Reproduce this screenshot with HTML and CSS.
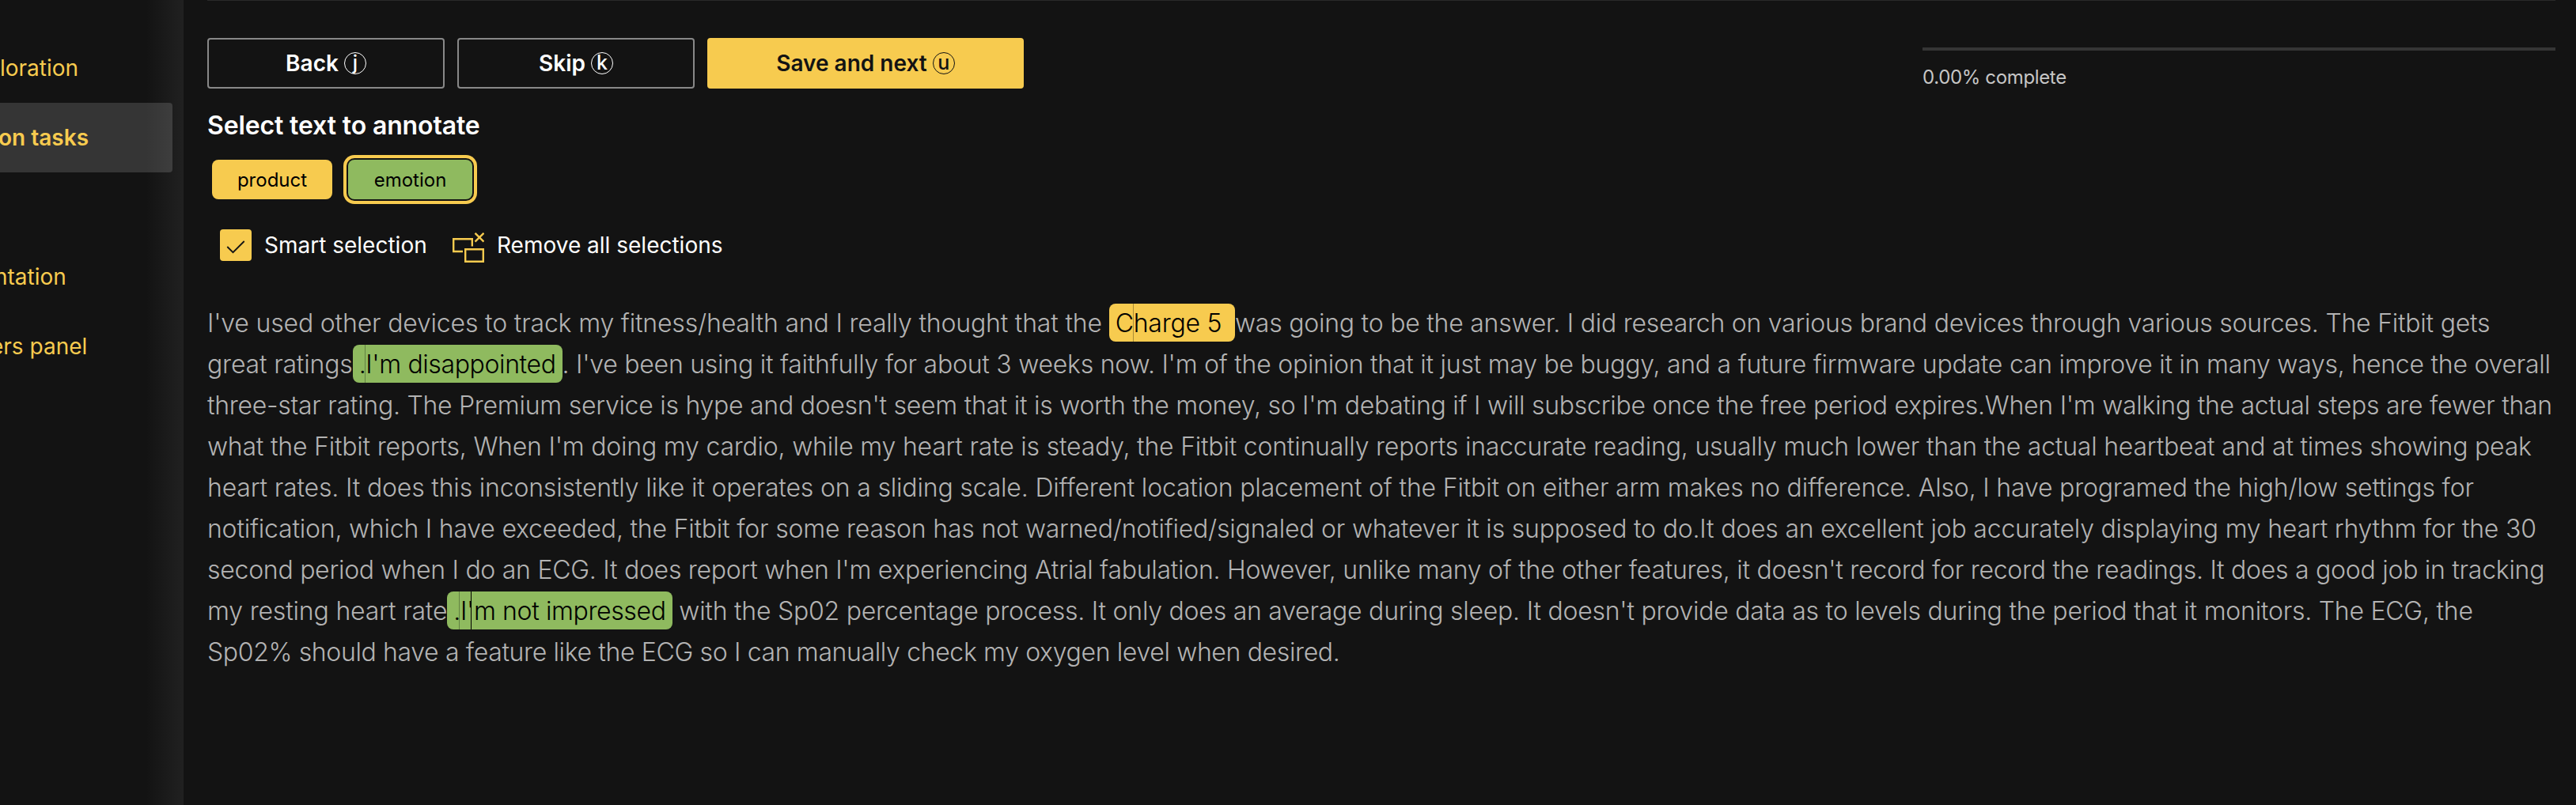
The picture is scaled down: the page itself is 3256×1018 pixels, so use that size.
FILE: index.html
```html
<!DOCTYPE html>
<html lang="en">

<head>
    <meta charset="UTF-8">
    <meta name="viewport" content="width=device-width, initial-scale=1.0">
    <title>Annotation tasks</title>
    <link rel="stylesheet" href="styles.css">
</head>

<body>
    <div class="app">
        <nav class="sidebar">
            <a class="nav-item nav-exploration">loration</a>
            <a class="nav-item nav-tasks active">on tasks</a>
            <a class="nav-item"></a>
            <a class="nav-item nav-documentation">ntation</a>
            <a class="nav-item nav-panel">ers panel</a>
        </nav>

        <main class="content">
            <div class="toolbar">
                <div class="actions">
                    <button class="btn">Back <span class="key">j</span></button>
                    <button class="btn">Skip <span class="key">k</span></button>
                    <button class="btn btn-primary">Save and next <span class="key">u</span></button>
                </div>
                <div class="progress">
                    <div class="progress-bar"></div>
                    <div class="progress-text">0.00% complete</div>
                </div>
            </div>

            <h2 class="title">Select text to annotate</h2>

            <div class="labels">
                <button class="label label-product">product</button>
                <button class="label label-emotion selected">emotion</button>
            </div>

            <div class="options">
                <span class="checkbox">
                    <svg width="40" height="40" viewBox="0 0 40 40">
                        <path d="M9.3 22l7.2 7.2L30.7 15" fill="none" stroke="#131313" stroke-width="1.8" />
                    </svg>
                </span>
                <span class="option-text smart">Smart selection</span>
                <svg class="remove-icon" width="40" height="40" viewBox="0 0 40 40">
                    <g fill="none" stroke="#f7cb4f" stroke-width="2.4">
                        <path d="M13 24H1.2V8.2H24.8V17.5" />
                        <path d="M16.2 21.2H38.8V36.8H16.2z" />
                        <path d="M28.5 .8l11 10.8M39.5 .8l-11 10.8" />
                    </g>
                </svg>
                <span class="option-text remove">Remove all selections</span>
            </div>

            <p class="document">
                <span class="line"><span class="loose">I've used other devices to track my fitness/health and I really thought that the </span><mark class="mark product">Charge 5&nbsp;</mark>was going to be the answer. I did research on various brand devices through various sources. The Fitbit gets</span>
                <span class="line snug"><span class="loose">great ratings</span><mark class="mark emotion">.I'm disappointed</mark>. I've been using it faithfully for about 3 weeks now. I'm of the opinion that it just may be buggy, and a future firmware update can improve it in many ways, hence the overall</span>
                <span class="line tight">three-star rating. The Premium service is hype and doesn't seem that it is worth the money, so I'm debating if I will subscribe once the free period expires.When I'm walking the actual steps are fewer than</span>
                <span class="line regular">what the Fitbit reports, When I'm doing my cardio, while my heart rate is steady, the Fitbit continually reports inaccurate reading, usually much lower than the actual heartbeat and at times showing peak</span>
                <span class="line loose">heart rates. It does this inconsistently like it operates on a sliding scale. Different location placement of the Fitbit on either arm makes no difference. Also, I have programed the high/low settings for</span>
                <span class="line regular">notification, which I have exceeded, the Fitbit for some reason has not warned/notified/signaled or whatever it is supposed to do.It does an excellent job accurately displaying my heart rhythm for the 30</span>
                <span class="line tight">second period when I do an ECG. It does report when I'm experiencing Atrial fabulation. However, unlike many of the other features, it doesn't record for record the readings. It does a good job in tracking</span>
                <span class="line"><span class="loose">my resting heart rate</span><mark class="mark emotion caret">.I'm not impressed</mark> with the Sp02 percentage process. It only does an average during sleep. It doesn't provide data as to levels during the period that it monitors. The ECG, the</span>
                <span class="line tightest">Sp02% should have a feature like the ECG so I can manually check my oxygen level when desired.</span>
            </p>
        </main>
    </div>
</body>

</html>
```

FILE: styles.css
```css
* {
    box-sizing: border-box;
}

body {
    margin: 0;
    background: #131313;
    color: #fff;
    font-family: Inter, "Liberation Sans", sans-serif;
    font-size: 28px;
}

.app {
    display: flex;
    height: 1018px;
    overflow: hidden;
}

.sidebar {
    position: relative;
    flex: 0 0 232px;
    padding: 42px 14px 0 0;
    overflow: hidden;
}

/* inner shadow along the right edge */
.sidebar::after {
    content: "";
    position: absolute;
    top: 0;
    right: 0;
    width: 48px;
    height: 100%;
    background: linear-gradient(to right, rgba(255, 255, 255, 0), rgba(255, 255, 255, 0.06));
}

.nav-item {
    display: block;
    height: 88px;
    line-height: 88px;
    color: #f7cb4f;
    white-space: nowrap;
}

.nav-item.active {
    background: #353535;
    border-radius: 0 4px 4px 0;
    font-weight: 600;
}

.nav-tasks {
    text-indent: -2px;
}

.nav-documentation {
    text-indent: -7px;
}

.nav-panel {
    text-indent: -12px;
}

.content {
    flex: 1;
    min-width: 0;
    margin: 0 26px 0 30px;
    border-top: 1px solid #2a2a2a;
    padding-top: 47px;
}

.toolbar {
    display: flex;
    justify-content: space-between;
    height: 64px;
}

.actions {
    display: flex;
    gap: 16px;
}

.btn {
    display: flex;
    align-items: center;
    justify-content: center;
    gap: 7px;
    width: 300px;
    height: 64px;
    padding: 0;
    border: 2px solid #888;
    border-radius: 4px;
    background: transparent;
    color: #fff;
    font: 600 28px Inter, sans-serif;
}

.btn-primary {
    width: 400px;
    border-color: #f7cb4f;
    background: #f7cb4f;
    color: #131313;
}

.key {
    width: 28px;
    height: 28px;
    border: 1px solid currentColor;
    border-radius: 50%;
    font-size: 25px;
    font-weight: 500;
    line-height: 24px;
    text-align: center;
}

.progress {
    width: 800px;
    padding-top: 12px;
}

.progress-bar {
    height: 4px;
    background: #353535;
}

.progress-text {
    margin-top: 18px;
    color: #c6c6c6;
    font-size: 24px;
    letter-spacing: -0.35px;
    line-height: 32px;
}

.title {
    margin: 27px 0 0;
    font-size: 32px;
    font-weight: 600;
    letter-spacing: -0.13px;
    line-height: 40px;
}

.labels {
    display: flex;
    gap: 20px;
    margin: 23px 0 0 6px;
}

.label {
    width: 152px;
    height: 50px;
    padding: 0;
    border: 0;
    border-radius: 8px;
    color: #000;
    font: 400 24px Inter, sans-serif;
}

.label-product {
    background: #f7cb4f;
}

.label-emotion {
    width: 157px;
    background: #8fba5f;
}

.label.selected {
    box-shadow: 0 0 0 2px #131313, 0 0 0 6px #f7cb4f;
}

.options {
    display: flex;
    align-items: center;
    height: 40px;
    margin: 38px 0 0 16px;
}

.checkbox {
    width: 40px;
    height: 40px;
    border-radius: 4px;
    background: #f7cb4f;
}

.checkbox svg {
    display: block;
}

.option-text {
    line-height: 40px;
    white-space: nowrap;
}

.smart {
    width: 238px;
    margin-left: 16px;
}

.remove-icon {
    position: relative;
    top: 4px;
}

.remove {
    margin-left: 16px;
}

.document {
    margin: 53px 0 0;
    color: #b3b3b3;
    font-size: 32px;
    font-weight: 300;
    letter-spacing: -0.24px;
    line-height: 52px;
}

.line {
    display: block;
    height: 52px;
    white-space: nowrap;
}

/* tracking steps */
.loose {
    letter-spacing: -0.18px;
}

.regular {
    letter-spacing: -0.21px;
}

.snug {
    letter-spacing: -0.25px;
}

.tight {
    letter-spacing: -0.27px;
}

.tightest {
    letter-spacing: -0.36px;
}

.mark {
    position: relative;
    display: inline-block;
    height: 48px;
    padding: 0 8px;
    border-radius: 8px;
    background: #8fba5f;
    color: #000;
    line-height: 50px;
}

.mark.product {
    background: #f7cb4f;
}

.mark::before {
    content: "";
    position: absolute;
    top: 0;
    bottom: 0;
    left: 15px;
    width: 1px;
    background: rgba(0, 0, 0, 0.3);
}

.mark.product::before {
    left: 30px;
}

.mark.emotion {
    letter-spacing: -0.38px;
}

.mark.caret::after {
    content: "";
    position: absolute;
    top: 0;
    bottom: 0;
    left: 30px;
    width: 1px;
    background: #000;
}
```
